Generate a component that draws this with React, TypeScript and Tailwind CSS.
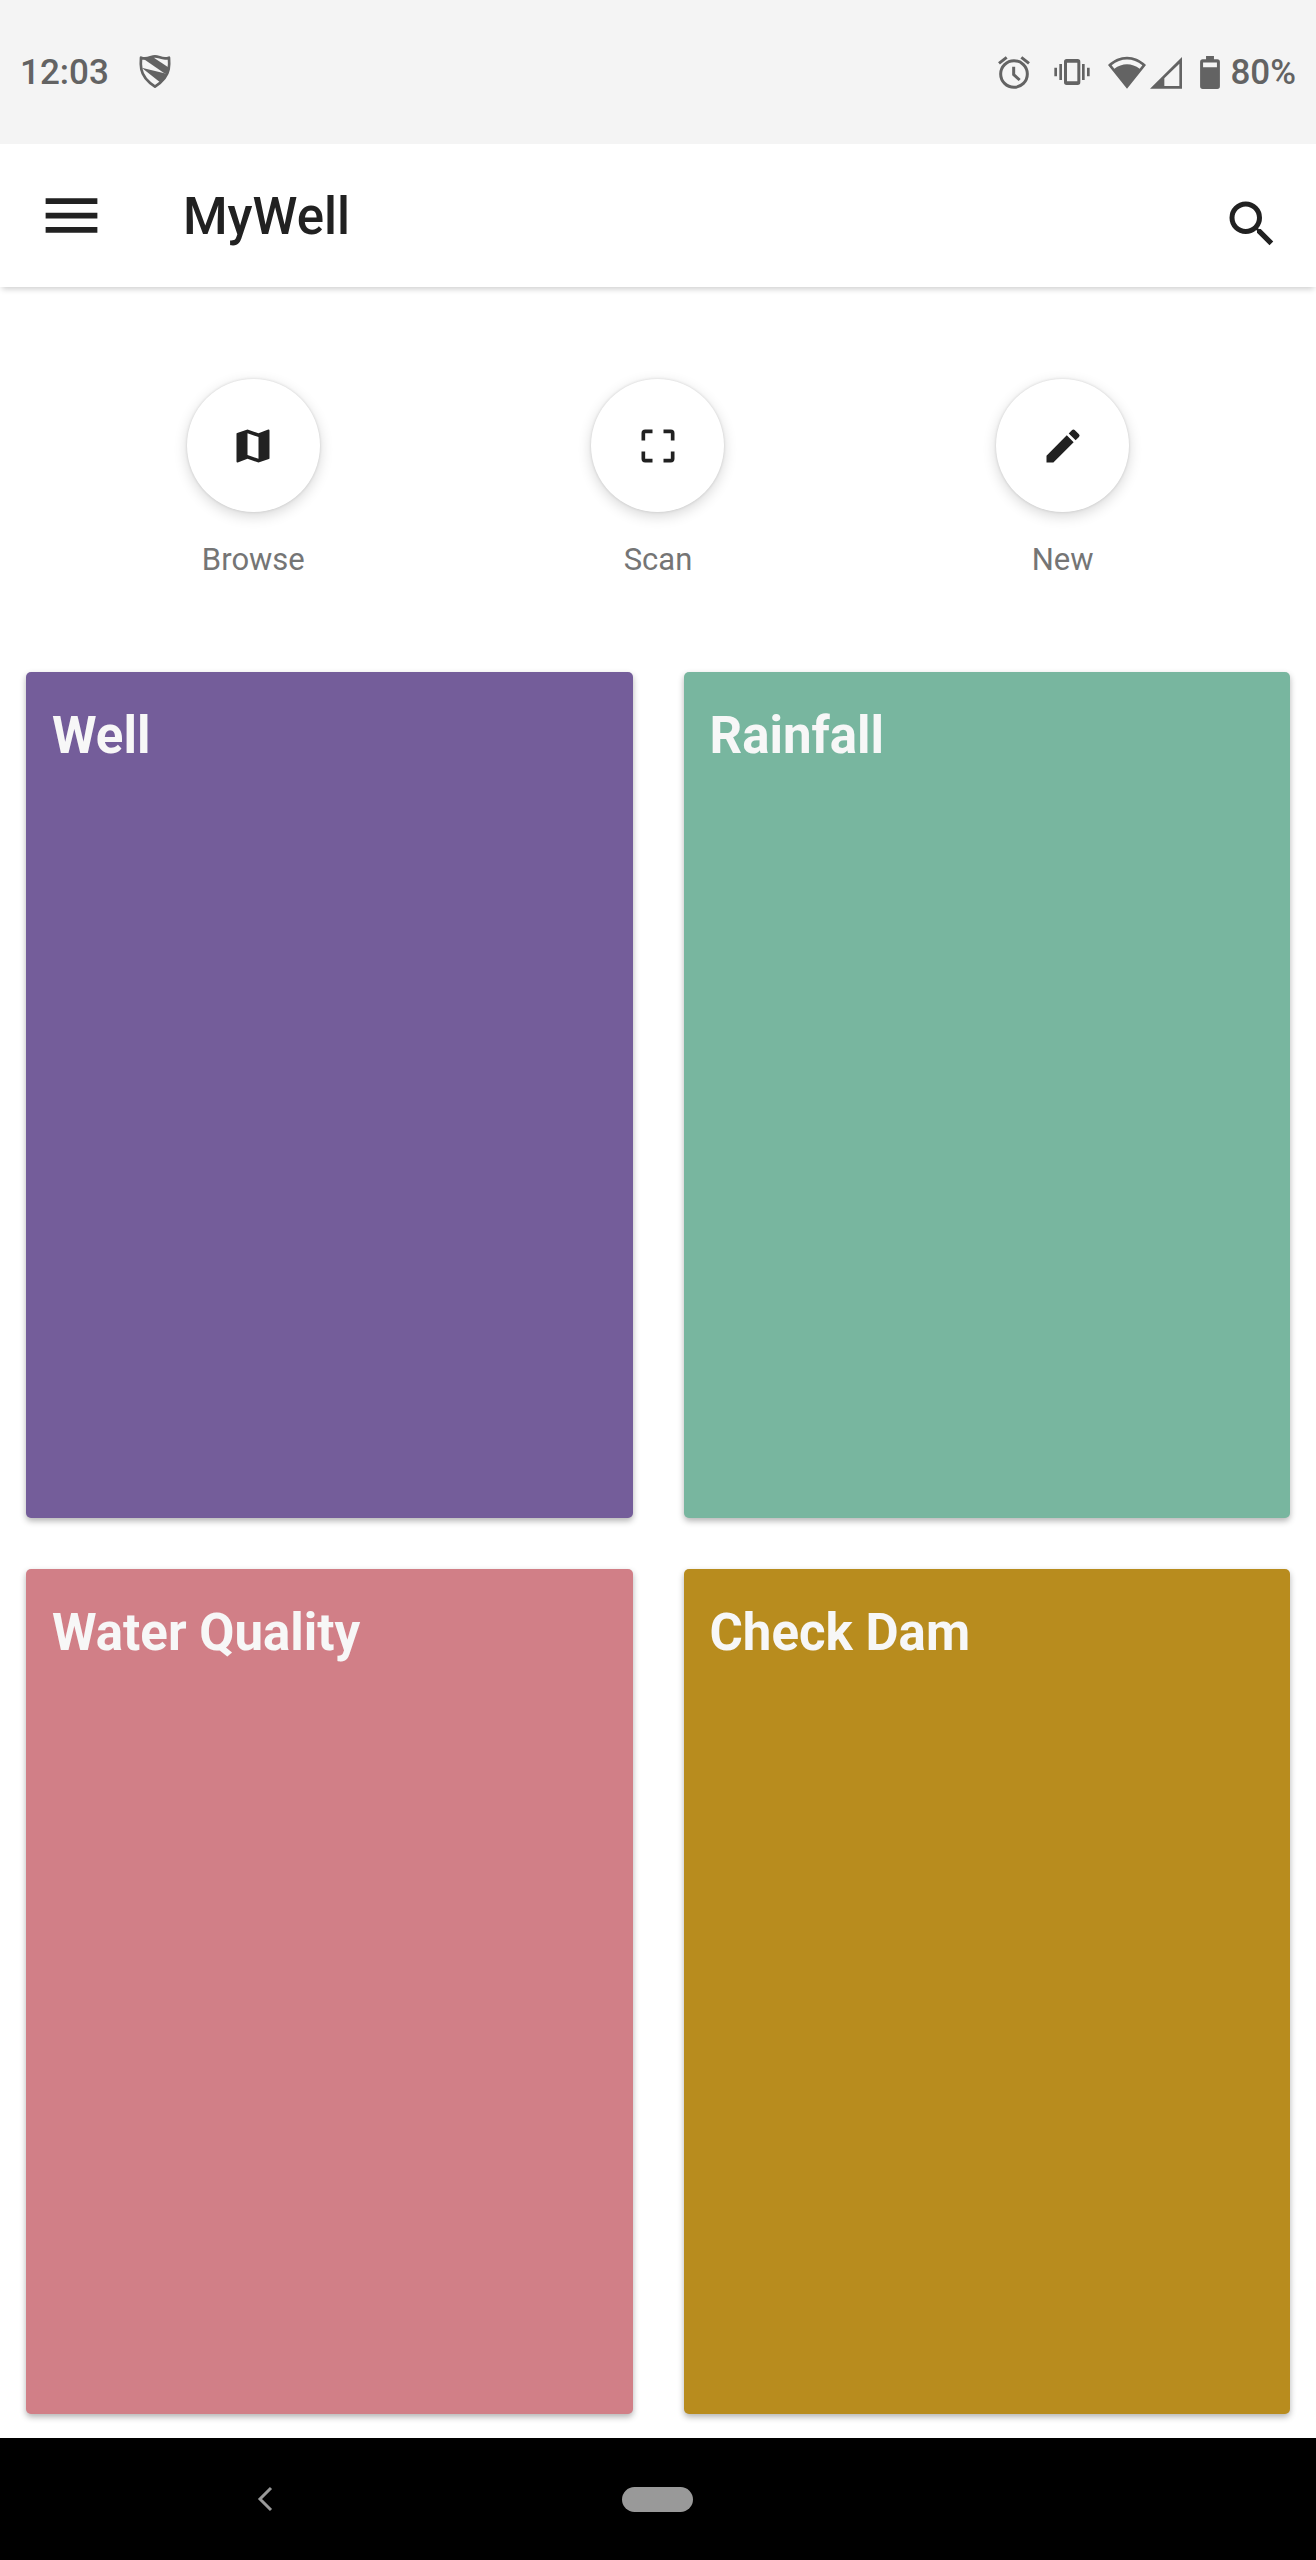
import React from "react";
import { MdMenu, MdSearch, MdMap, MdEdit } from "react-icons/md";

function ShieldIcon() {
  return (
    <svg viewBox="0 0 96 102" className="h-[34px] w-8" fill="none" aria-label="Shield">
      <path
        d="M6 8C16 12 26 10 34 7C40 5 44 4 48 4C52 4 56 5 62 7C70 10 80 12 90 8C91 20 91 32 89 43C85 65 68 82 48 95C28 82 11 65 7 43C5 32 5 20 6 8Z"
        stroke="currentColor"
        strokeWidth="8"
        strokeLinejoin="round"
      />
      <path d="M14 12L40 5L90 38L86 58L76 55Z" fill="currentColor" />
      <path d="M8 38L76 55L86 56L66 84Z" fill="currentColor" />
    </svg>
  );
}

function AlarmIcon() {
  return (
    <svg viewBox="0 0 96 99" className="h-[33px] w-8" fill="none" stroke="currentColor" aria-label="Alarm">
      <circle cx="48" cy="54" r="40" strokeWidth="9" />
      <path d="M47 32V56L65 72" strokeWidth="9" />
      <path d="M3 22L26 4M93 22L70 4" strokeWidth="9" />
    </svg>
  );
}

function VibrateIcon() {
  return (
    <svg viewBox="0 0 108 78" className="h-[26px] w-9" fill="currentColor" aria-label="Vibrate">
      <path
        fillRule="evenodd"
        d="M38 0H71Q79 0 79 8V70Q79 78 71 78H38Q30 78 30 70V8Q30 0 38 0ZM39 11V67H70V11Z"
      />
      <path d="M16 15H24V63H16ZM1 26H9V52H1ZM84 15H92V63H84ZM99 26H107V52H99Z" />
    </svg>
  );
}

function WifiIcon() {
  return (
    <svg viewBox="0 0 114 99" className="h-[33px] w-[38px]" fill="currentColor" aria-label="Wi-Fi">
      <path
        fillRule="evenodd"
        d="M57 98L0 27C34 -6 80 -6 114 27ZM11 28L19 38C42 20 72 20 95 38L103 28C76 5 38 5 11 28Z"
      />
    </svg>
  );
}

function SignalIcon() {
  return (
    <svg viewBox="0 0 96 96" className="size-8" fill="currentColor" aria-label="Mobile signal">
      <path fillRule="evenodd" d="M96 0V95H0ZM88 20L43 64V87H88Z" />
    </svg>
  );
}

function BatteryIcon() {
  return (
    <svg viewBox="0 0 60 100" className="h-[33px] w-5" fill="currentColor" aria-label="Battery">
      <path
        fillRule="evenodd"
        d="M18 0H42V10H52Q60 10 60 18V92Q60 100 52 100H8Q0 100 0 92V18Q0 10 8 10H18ZM9 20V34H51V20Z"
      />
    </svg>
  );
}

function ScanIcon() {
  return (
    <svg viewBox="0 0 24 24" className="size-11" fill="currentColor" aria-hidden="true">
      <path d="M5 3H9V5H5V9H3V5A2 2 0 0 1 5 3ZM15 3H19A2 2 0 0 1 21 5V9H19V5H15ZM19 15H21V19A2 2 0 0 1 19 21H15V19H19ZM3 15H5V19H9V21H5A2 2 0 0 1 3 19Z" />
    </svg>
  );
}

const actions = [
  { label: "Browse", icon: <MdMap className="size-11" /> },
  { label: "Scan", icon: <ScanIcon /> },
  { label: "New", icon: <MdEdit className="size-11" /> },
];

const cards = [
  { label: "Well", color: "bg-[#745d9a]" },
  { label: "Rainfall", color: "bg-[#78b69f]" },
  { label: "Water Quality", color: "bg-[#d17f87]" },
  { label: "Check Dam", color: "bg-[#b88c1e]" },
];

export default function App() {
  return (
    <div className="flex min-h-screen flex-col bg-white font-['Roboto',sans-serif] text-[#212121]">
      <div className="flex h-36 items-center justify-between bg-[#f4f4f4] px-5 text-[35px] font-medium text-[#636363]">
        <div className="flex items-center gap-[30px]">
          <span className="pt-0.5">12:03</span>
          <ShieldIcon />
        </div>
        <div className="flex items-center">
          <AlarmIcon />
          <span className="ml-6 flex">
            <VibrateIcon />
          </span>
          <span className="ml-[18px] flex items-end gap-1">
            <WifiIcon />
            <SignalIcon />
          </span>
          <span className="mr-2.5 ml-[18px] flex">
            <BatteryIcon />
          </span>
          <span className="pt-0.5">80%</span>
        </div>
      </div>

      <header className="flex h-[143px] items-center bg-white pr-[34px] pl-[37px] shadow-[0_4px_6px_-2px_rgba(0,0,0,0.2)]">
        <button type="button" aria-label="Menu">
          <MdMenu className="size-[69px]" />
        </button>
        <h1 className="ml-[77px] flex-1 pt-1 text-[51px] font-medium">MyWell</h1>
        <button type="button" aria-label="Search" className="mt-4">
          <MdSearch className="size-[60px]" />
        </button>
      </header>

      <main className="flex flex-1 flex-col">
        <div className="grid grid-cols-3 px-[51px] pt-[92px] pb-[92px]">
          {actions.map((action) => (
            <button key={action.label} type="button" className="flex flex-col items-center gap-7">
              <span className="flex size-[133px] items-center justify-center rounded-full bg-white shadow-[0_4px_14px_rgba(0,0,0,0.16),0_0_3px_rgba(0,0,0,0.14)]">
                {action.icon}
              </span>
              <span className="text-[31px] leading-10 text-[#757575]">{action.label}</span>
            </button>
          ))}
        </div>

        <div className="grid flex-1 auto-rows-fr grid-cols-2 gap-[51px] px-[26px] pb-6">
          {cards.map((card) => (
            <button
              key={card.label}
              type="button"
              className={`${card.color} flex items-start rounded-[5px] px-[26px] pt-[34px] text-left text-[51px] leading-[60px] font-bold text-[#f7f7f7] shadow-[0_3px_6px_rgba(0,0,0,0.3)]`}
            >
              {card.label}
            </button>
          ))}
        </div>
      </main>

      <nav className="grid h-[122px] grid-cols-3 items-center bg-black px-[69px] text-[#999999]">
        <button type="button" aria-label="Back" className="flex justify-center">
          <svg viewBox="0 0 16 26" className="h-[26px] w-4" fill="none" stroke="currentColor" strokeWidth="3">
            <path d="M14 2L3 13L14 24" />
          </svg>
        </button>
        <button type="button" aria-label="Home" className="h-[25px] w-[71px] justify-self-center rounded-full bg-[#999999]" />
      </nav>
    </div>
  );
}
